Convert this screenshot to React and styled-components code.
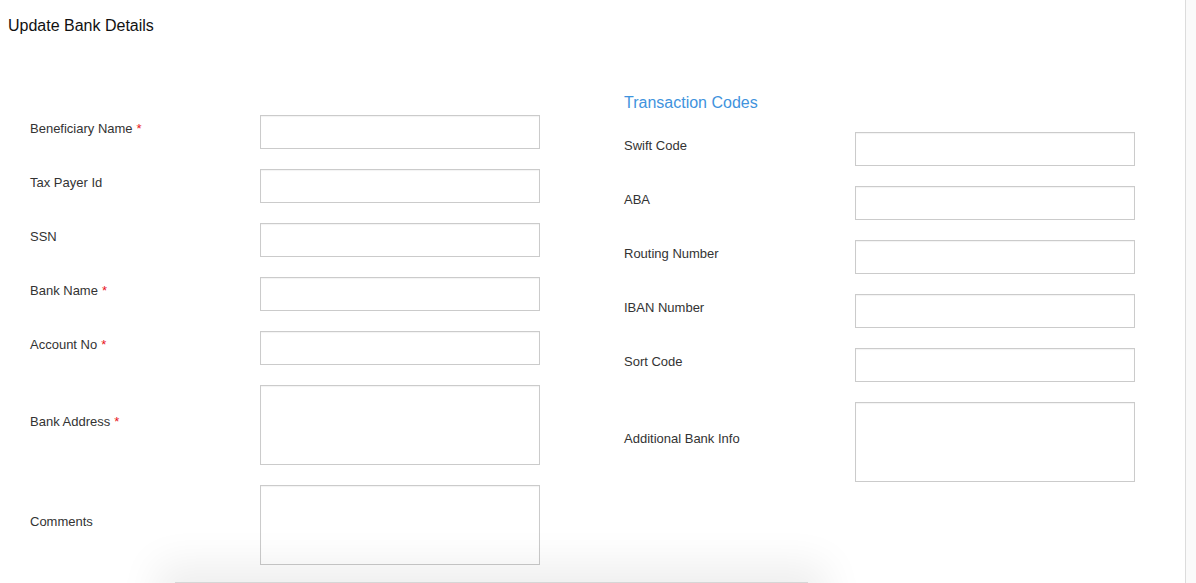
import React from "react"
import styled, { createGlobalStyle } from "styled-components"

const GlobalStyle = createGlobalStyle`
  html, body {
    margin: 0;
    padding: 0;
    background: #fafafa;
    font-family: "Liberation Sans", Arial, Helvetica, sans-serif;
    color: #333;
  }
`

const leftFields = [
  { label: "Beneficiary Name", required: true },
  { label: "Tax Payer Id" },
  { label: "SSN" },
  { label: "Bank Name", required: true },
  { label: "Account No", required: true },
  { label: "Bank Address", required: true, multiline: true },
  { label: "Comments", multiline: true },
]

const rightFields = [
  { label: "Swift Code" },
  { label: "ABA" },
  { label: "Routing Number" },
  { label: "IBAN Number" },
  { label: "Sort Code" },
  { label: "Additional Bank Info", multiline: true },
]

const Field = ({ field, labelWidth }) => (
  <Row labelWidth={labelWidth}>
    <Label>
      {field.label}
      {field.required && <Star>*</Star>}
    </Label>
    {field.multiline ? <TextArea /> : <Input type="text" />}
  </Row>
)

const App = () => {
  return (
    <>
      <GlobalStyle />
      <Page>
        <Title>Update Bank Details</Title>
        <Columns>
          <LeftColumn>
            {leftFields.map((f) => (
              <Field key={f.label} field={f} labelWidth={230} />
            ))}
          </LeftColumn>
          <RightColumn>
            <SectionTitle>Transaction Codes</SectionTitle>
            {rightFields.map((f) => (
              <Field key={f.label} field={f} labelWidth={231} />
            ))}
          </RightColumn>
        </Columns>
      </Page>
      <FooterShadow />
    </>
  )
}

const Page = styled.div`
  width: 1186px;
  min-height: 583px;
  background: #fff;
  border-right: 1px solid #dcdcdc;
  box-sizing: border-box;
  overflow: hidden;
`

const Title = styled.h1`
  margin: 0;
  padding: 17px 8px 0;
  font-size: 16px;
  line-height: 18px;
  font-weight: normal;
  color: #111;
`

const Columns = styled.div`
  display: grid;
  grid-template-columns: 510px 511px;
  column-gap: 84px;
  margin-top: 59px;
  padding-left: 30px;
`

const LeftColumn = styled.div`
  padding-top: 21px;
`

const RightColumn = styled.div``

const SectionTitle = styled.h2`
  margin: 0 0 20px;
  font-size: 16px;
  line-height: 18px;
  font-weight: normal;
  color: #3f93dd;
`

const Row = styled.div`
  display: grid;
  grid-template-columns: ${(p) => p.labelWidth}px 280px;
  align-items: center;
  margin-bottom: 20px;
`

const Label = styled.label`
  font-size: 13px;
  line-height: 16px;
  color: #333;
  padding-bottom: 6px;
`

const Star = styled.span`
  color: #e8141c;
  margin-left: 4px;
`

const Input = styled.input`
  box-sizing: border-box;
  width: 280px;
  height: 34px;
  margin: 0;
  border: 1px solid #cbcbcb;
  border-radius: 0;
  background: #fff;
  box-shadow: inset 0 1px 1px rgba(0, 0, 0, 0.05);
  outline: none;
`

const TextArea = styled.textarea`
  box-sizing: border-box;
  display: block;
  width: 280px;
  height: 80px;
  margin: 0;
  border: 1px solid #cbcbcb;
  border-radius: 0;
  background: #fff;
  box-shadow: inset 0 1px 1px rgba(0, 0, 0, 0.05);
  resize: none;
  outline: none;
`

const FooterShadow = styled.div`
  position: fixed;
  left: 175px;
  width: 633px;
  top: 582px;
  height: 40px;
  background: #d6d6d6;
  box-shadow: 0 0 40px 18px rgba(0, 0, 0, 0.07);
`

export default App
